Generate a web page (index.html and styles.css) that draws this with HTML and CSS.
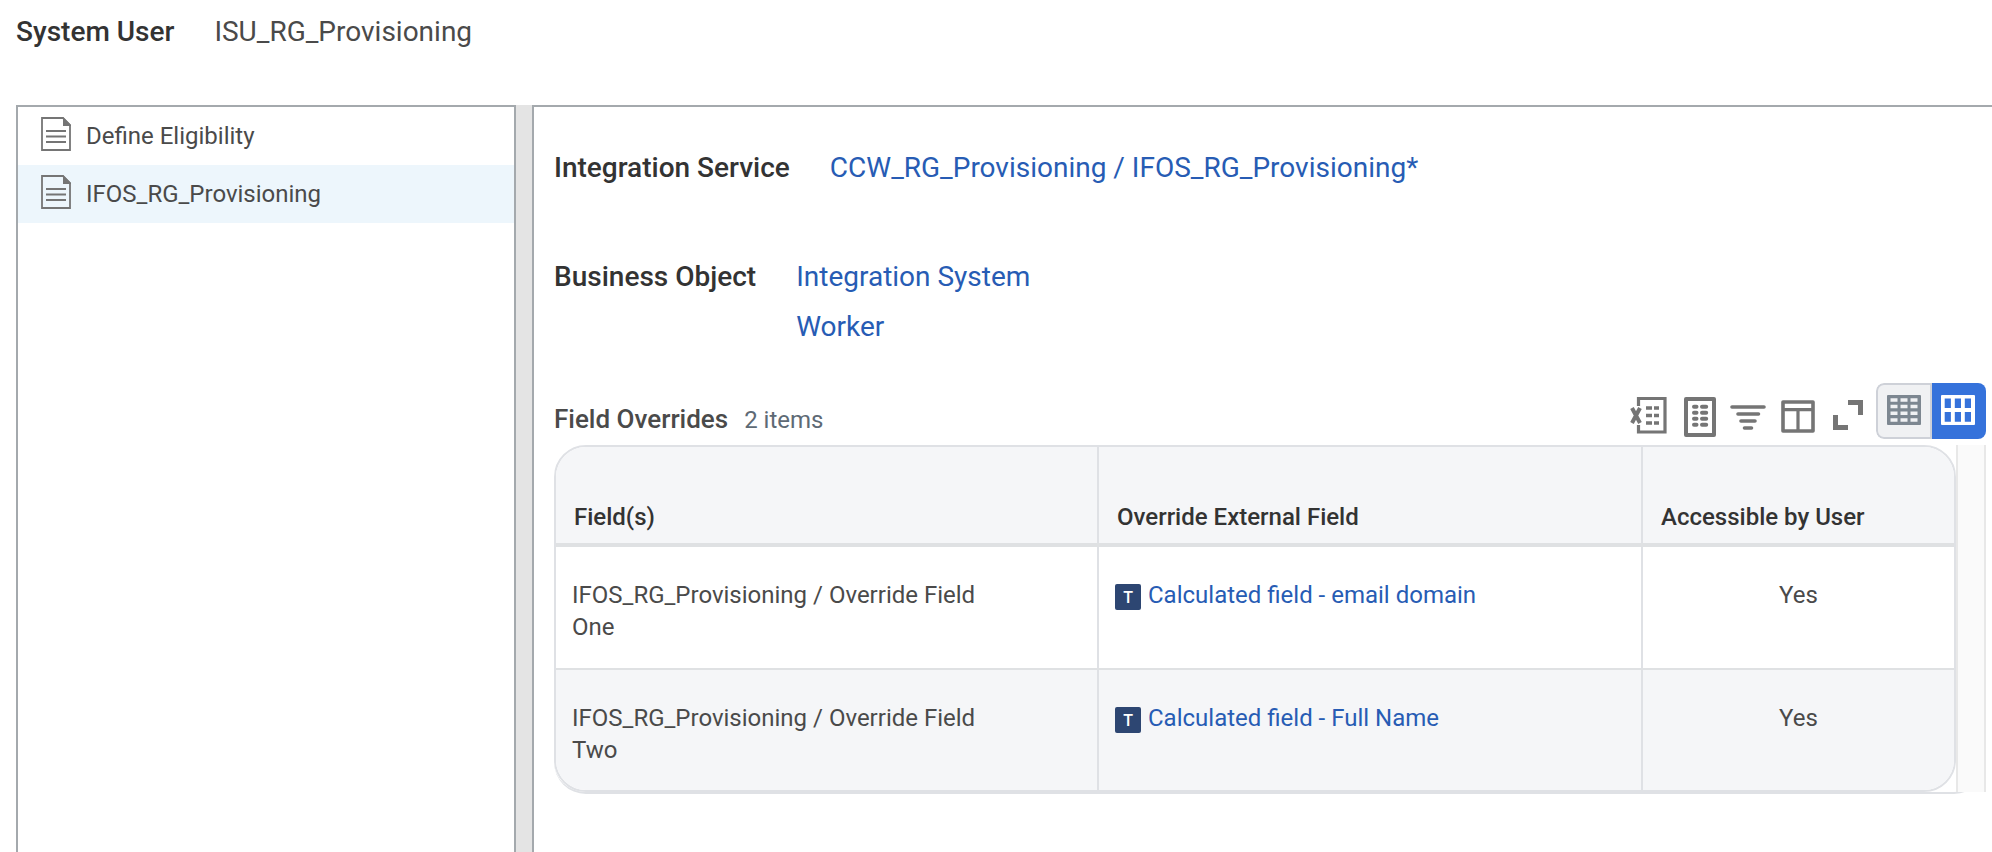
FILE: index.html
```html
<!DOCTYPE html>
<html lang="en">
<head>
  <meta charset="UTF-8">
  <meta name="viewport" content="width=device-width, initial-scale=1.0">
  <title>View Integration System</title>
  <link rel="stylesheet" href="styles.css">
</head>
<body>
  <div class="field system-user">
    <span class="label">System User</span>
    <span class="value">ISU_RG_Provisioning</span>
  </div>

  <div class="panels">
    <div class="sidebar">
      <div class="tree-item">
        <svg class="doc-icon" width="30" height="34" viewBox="0 0 30 34">
          <path d="M1 1H22L29 8V33H1Z" fill="#fff" stroke="#757575" stroke-width="1.8"/>
          <path d="M22 0L30 8V9H22Z" fill="#757575"/>
          <path d="M5 14H25M5 19.5H25M5 25H25" stroke="#757575" stroke-width="2.2"/>
        </svg>
        <span>Define Eligibility</span>
      </div>
      <div class="tree-item selected">
        <svg class="doc-icon" width="30" height="34" viewBox="0 0 30 34">
          <path d="M1 1H22L29 8V33H1Z" fill="none" stroke="#757575" stroke-width="1.8"/>
          <path d="M22 0L30 8V9H22Z" fill="#757575"/>
          <path d="M5 14H25M5 19.5H25M5 25H25" stroke="#757575" stroke-width="2.2"/>
        </svg>
        <span>IFOS_RG_Provisioning</span>
      </div>
    </div>

    <div class="splitter"></div>

    <div class="main">
      <div class="field service">
        <span class="label">Integration Service</span>
        <a class="link">CCW_RG_Provisioning / IFOS_RG_Provisioning*</a>
      </div>

      <div class="field business">
        <span class="label">Business Object</span>
        <div class="links">
          <a class="link">Integration System</a>
          <a class="link">Worker</a>
        </div>
      </div>

      <div class="grid-header">
        <div class="grid-title">
          <span class="title">Field Overrides</span>
          <span class="count">2 items</span>
        </div>
        <div class="toolbar">
          <!-- export to excel -->
          <svg class="excel" width="37" height="37" viewBox="0 0 37 37" fill="none" stroke="#757575">
            <path d="M8.5 9V1.5H35V35H8.5V28" stroke-width="3.2"/>
            <path d="M2 11L10 26M10 11L2 26" stroke-width="4"/>
            <path d="M16 11H22M24 11H29M16 18.5H22M24 18.5H29M16 26H22M24 26H29" stroke-width="3.6"/>
          </svg>
          <!-- worksheet -->
          <svg class="sheet" width="32" height="40" viewBox="0 0 32 40" fill="none" stroke="#757575">
            <rect x="2" y="2" width="28" height="36" stroke-width="4" stroke-linejoin="round"/>
            <path d="M10 9.8H12.5M18 9.8H22.2M10 15.8H12.5M18 15.8H22.2M10 21.8H12.5M18 21.8H22.2M10 27.8H12.5M18 27.8H22.2" stroke-width="4" stroke-linecap="round"/>
          </svg>
          <!-- filter -->
          <svg class="filter" width="36" height="26" viewBox="0 0 36 26" fill="none" stroke="#757575" stroke-width="3.6" stroke-linecap="round">
            <path d="M2 3H34M8 10H28.5M11 17H25M14.5 24H21.5"/>
          </svg>
          <!-- columns -->
          <svg class="columns" width="34" height="33" viewBox="0 0 34 33" fill="none" stroke="#757575">
            <rect x="2" y="2" width="30" height="29" stroke-width="3.6" stroke-linejoin="round"/>
            <path d="M2 9.7H32M17 9.7V31" stroke-width="3.2"/>
          </svg>
          <!-- expand -->
          <svg class="expand" width="30" height="30" viewBox="0 0 30 30" fill="none" stroke="#757575" stroke-width="5">
            <path d="M15 2.5H27.5V15M2.5 15V27.5H15"/>
          </svg>
          <div class="view-toggle">
            <div class="toggle">
              <svg width="34" height="30" viewBox="0 0 34 30">
                <rect width="34" height="30" rx="1" fill="#7d8791"/>
                <path d="M3.5 5H10.5M13.5 5H20.5M23.5 5H30.5M3.5 11.5H10.5M13.5 11.5H20.5M23.5 11.5H30.5M3.5 18.3H10.5M13.5 18.3H20.5M23.5 18.3H30.5M3.5 25H10.5M13.5 25H20.5M23.5 25H30.5" stroke="#f0f1f3" stroke-width="3.6"/>
              </svg>
            </div>
            <div class="toggle active">
              <svg width="34" height="30" viewBox="0 0 34 30">
                <rect width="34" height="30" rx="1" fill="#fff"/>
                <path d="M3.7 3.5h6.2v9.5h-6.2zM13.8 3.5h6.2v9.5h-6.2zM23.8 3.5h6.2v9.5h-6.2zM3.7 17h6.2v9.8h-6.2zM13.8 17h6.2v9.8h-6.2zM23.8 17h6.2v9.8h-6.2z" fill="#3572db"/>
              </svg>
            </div>
          </div>
        </div>
      </div>

      <div class="grid-wrap">
        <div class="grid">
          <div class="row head">
            <div class="cell">Field(s)</div>
            <div class="cell">Override External Field</div>
            <div class="cell">Accessible by User</div>
          </div>
          <div class="row">
            <div class="cell">IFOS_RG_Provisioning / Override Field<br>One</div>
            <div class="cell"><span class="type-icon">T</span><a class="link">Calculated field - email domain</a></div>
            <div class="cell center">Yes</div>
          </div>
          <div class="row alt">
            <div class="cell">IFOS_RG_Provisioning / Override Field<br>Two</div>
            <div class="cell"><span class="type-icon">T</span><a class="link">Calculated field - Full Name</a></div>
            <div class="cell center">Yes</div>
          </div>
        </div>
        <div class="gutter"></div>
      </div>
    </div>
  </div>
</body>
</html>
```

FILE: styles.css
```css
* {
  box-sizing: border-box;
}

body {
  margin: 0;
  height: 852px;
  overflow: hidden;
  display: flex;
  flex-direction: column;
  font-family: Roboto, Arial, sans-serif;
  font-size: 24px;
  color: #4a4a4a;
  background-color: #fff;
}

.field {
  display: flex;
  align-items: flex-start;
  gap: 40px;
  font-size: 28px;
  line-height: 50px;
  white-space: nowrap;
}

.label {
  font-weight: 500;
  color: #333;
}

.link {
  color: #275cb4;
}

.system-user {
  height: 105px;
  padding: 7px 0 0 16px;
}

.panels {
  flex: 1;
  display: flex;
  min-height: 0;
  padding-left: 16px;
}

.sidebar {
  width: 500px;
  border: 2px solid #a4a9ad;
  border-bottom: none;
}

.tree-item {
  height: 58px;
  display: flex;
  align-items: center;
  gap: 15px;
  padding: 0 0 4px 23px;
}

.tree-item span {
  margin-top: 4px;
}

.tree-item.selected {
  background-color: #edf6fc;
}

.splitter {
  width: 16px;
  background-color: #e4e4e4;
}

.main {
  flex: 1;
  min-width: 0;
  border-top: 2px solid #a4a9ad;
  border-left: 2px solid #a4a9ad;
  padding: 36px 6px 0 20px;
}

.business {
  margin-top: 59px;
}

.links {
  display: flex;
  flex-direction: column;
}

/* grid title and toolbar */
.grid-header {
  height: 93px;
  display: flex;
  justify-content: space-between;
  align-items: flex-start;
}

.grid-title {
  display: flex;
  align-items: baseline;
  gap: 16px;
  padding-top: 51px;
  line-height: 32px;
}

.title {
  font-size: 26px;
  font-weight: 500;
}

.count {
  color: #5e6a75;
}

.toolbar {
  display: flex;
  align-items: flex-start;
  padding-top: 31px;
}

.excel {
  margin: 14px 17px 0 0;
}

.sheet {
  margin: 14px 14px 0 0;
}

.filter {
  margin: 21px 15px 0 0;
}

.columns {
  margin: 17px 18px 0 0;
}

.expand {
  margin: 17px 13px 0 0;
}

.view-toggle {
  display: flex;
  width: 110px;
  height: 56px;
  border-radius: 8px;
  overflow: hidden;
}

.toggle {
  width: 56px;
  display: flex;
  align-items: center;
  padding: 0 0 2px 9px;
  border: 2px solid #ced1d8;
  border-radius: 8px 0 0 8px;
  background-color: #f0f1f3;
}

.toggle.active {
  width: 54px;
  border: none;
  border-radius: 0;
  background-color: #3572db;
}

/* grid */
.grid-wrap {
  display: flex;
  border-bottom: 2px solid #dfe1e5;
  border-radius: 32px;
}

.grid {
  width: 1402px;
  border: 2px solid #dfe1e5;
  border-radius: 32px;
  overflow: hidden;
}

.row {
  display: grid;
  grid-template-columns: 541px 544px 1fr;
  height: 121px;
  line-height: 32px;
}

.row.alt {
  height: 122px;
  border-top: 2px solid #dfe1e3;
  background-color: #f5f6f8;
}

.cell {
  display: flex;
  align-items: flex-start;
  padding: 32px 16px 0;
  white-space: nowrap;
}

.cell + .cell {
  border-left: 2px solid #dfe1e5;
}

.row.head {
  height: 100px;
  background-color: #f5f6f8;
  border-bottom: 4px solid #dfe1e3;
  font-weight: 500;
  color: #333;
}

.head .cell {
  padding: 54px 18px 0;
}

.cell.center {
  justify-content: center;
}

.type-icon {
  width: 26px;
  height: 26px;
  margin: 5px 7px 0 0;
  border-radius: 2px;
  background-color: #2d4672;
  color: #fff;
  font-size: 16px;
  font-weight: 500;
  line-height: 27px;
  text-align: center;
}

.gutter {
  width: 30px;
  border: 2px solid #e8e8e8;
  border-top: none;
  border-bottom: none;
  background-color: #fafafa;
}
```
